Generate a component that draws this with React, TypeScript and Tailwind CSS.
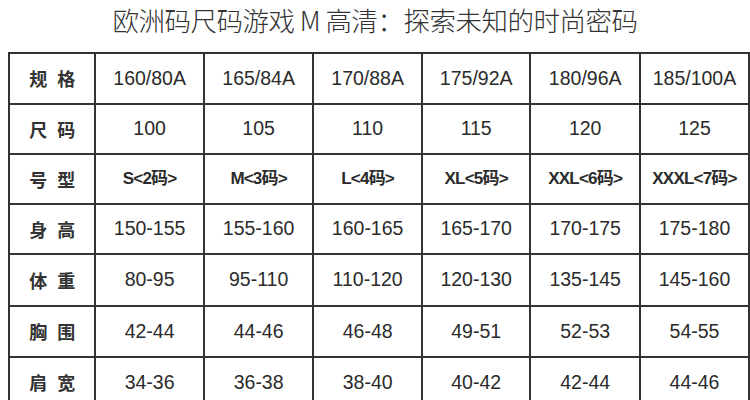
const cols = ["160/80A", "165/84A", "170/88A", "175/92A", "180/96A", "185/100A"];

const rows: { label: string; cells: string[]; small?: boolean; h: string }[] = [
  { label: "规 格", cells: cols, h: "h-[51px]" },
  { label: "尺 码", cells: ["100", "105", "110", "115", "120", "125"], h: "h-[50px]" },
  { label: "号 型", cells: ["S<2码>", "M<3码>", "L<4码>", "XL<5码>", "XXL<6码>", "XXXL<7码>"], small: true, h: "h-[50px]" },
  { label: "身 高", cells: ["150-155", "155-160", "160-165", "165-170", "170-175", "175-180"], h: "h-[50px]" },
  { label: "体 重", cells: ["80-95", "95-110", "110-120", "120-130", "135-145", "145-160"], h: "h-[52px]" },
  { label: "胸 围", cells: ["42-44", "44-46", "46-48", "49-51", "52-53", "54-55"], h: "h-[51px]" },
  { label: "肩 宽", cells: ["34-36", "36-38", "38-40", "40-42", "42-44", "44-46"], h: "h-[51px]" },
];

const widths = ["w-[88px]", "w-[110px]", "w-[111px]", "w-[110px]", "w-[110px]", "w-[111px]", "w-[110px]"];

export default function App() {
  return (
    <div className="w-[750px] h-[400px] overflow-hidden bg-white relative font-['Liberation_Sans','Noto_Sans_CJK_SC',sans-serif]">
      <div className="h-[52px] flex items-start justify-center pt-[2px]">
        <h1 className="text-[26.5px] leading-[36px] font-light text-[#333] font-['Noto_Sans_CJK_SC',sans-serif] tracking-[-0.5px]">
          欧洲码尺码游戏 M 高清：探索未知的时尚密码
        </h1>
      </div>
      <table className="ml-[8px] border-collapse table-fixed text-[#2b2b2b]">
        <tbody>
          {rows.map((r) => (
            <tr key={r.label} className={r.h}>
              <td className={`${widths[0]} border-2 border-[#333] text-[#333]`}>
                <div className="flex justify-center gap-[10px] text-[18px] font-bold font-['Noto_Sans_CJK_SC',sans-serif]">
                  {r.label.split(" ").map((ch) => (
                    <span key={ch}>{ch}</span>
                  ))}
                </div>
              </td>
              {r.cells.map((c, i) => (
                <td
                  key={c}
                  className={`${widths[i + 1]} border-2 border-[#333] text-center ${
                    r.small ? "text-[17px] font-bold tracking-[-0.8px]" : "text-[19.5px]"
                  }`}
                >
                  {c}
                </td>
              ))}
            </tr>
          ))}
        </tbody>
      </table>
    </div>
  );
}
